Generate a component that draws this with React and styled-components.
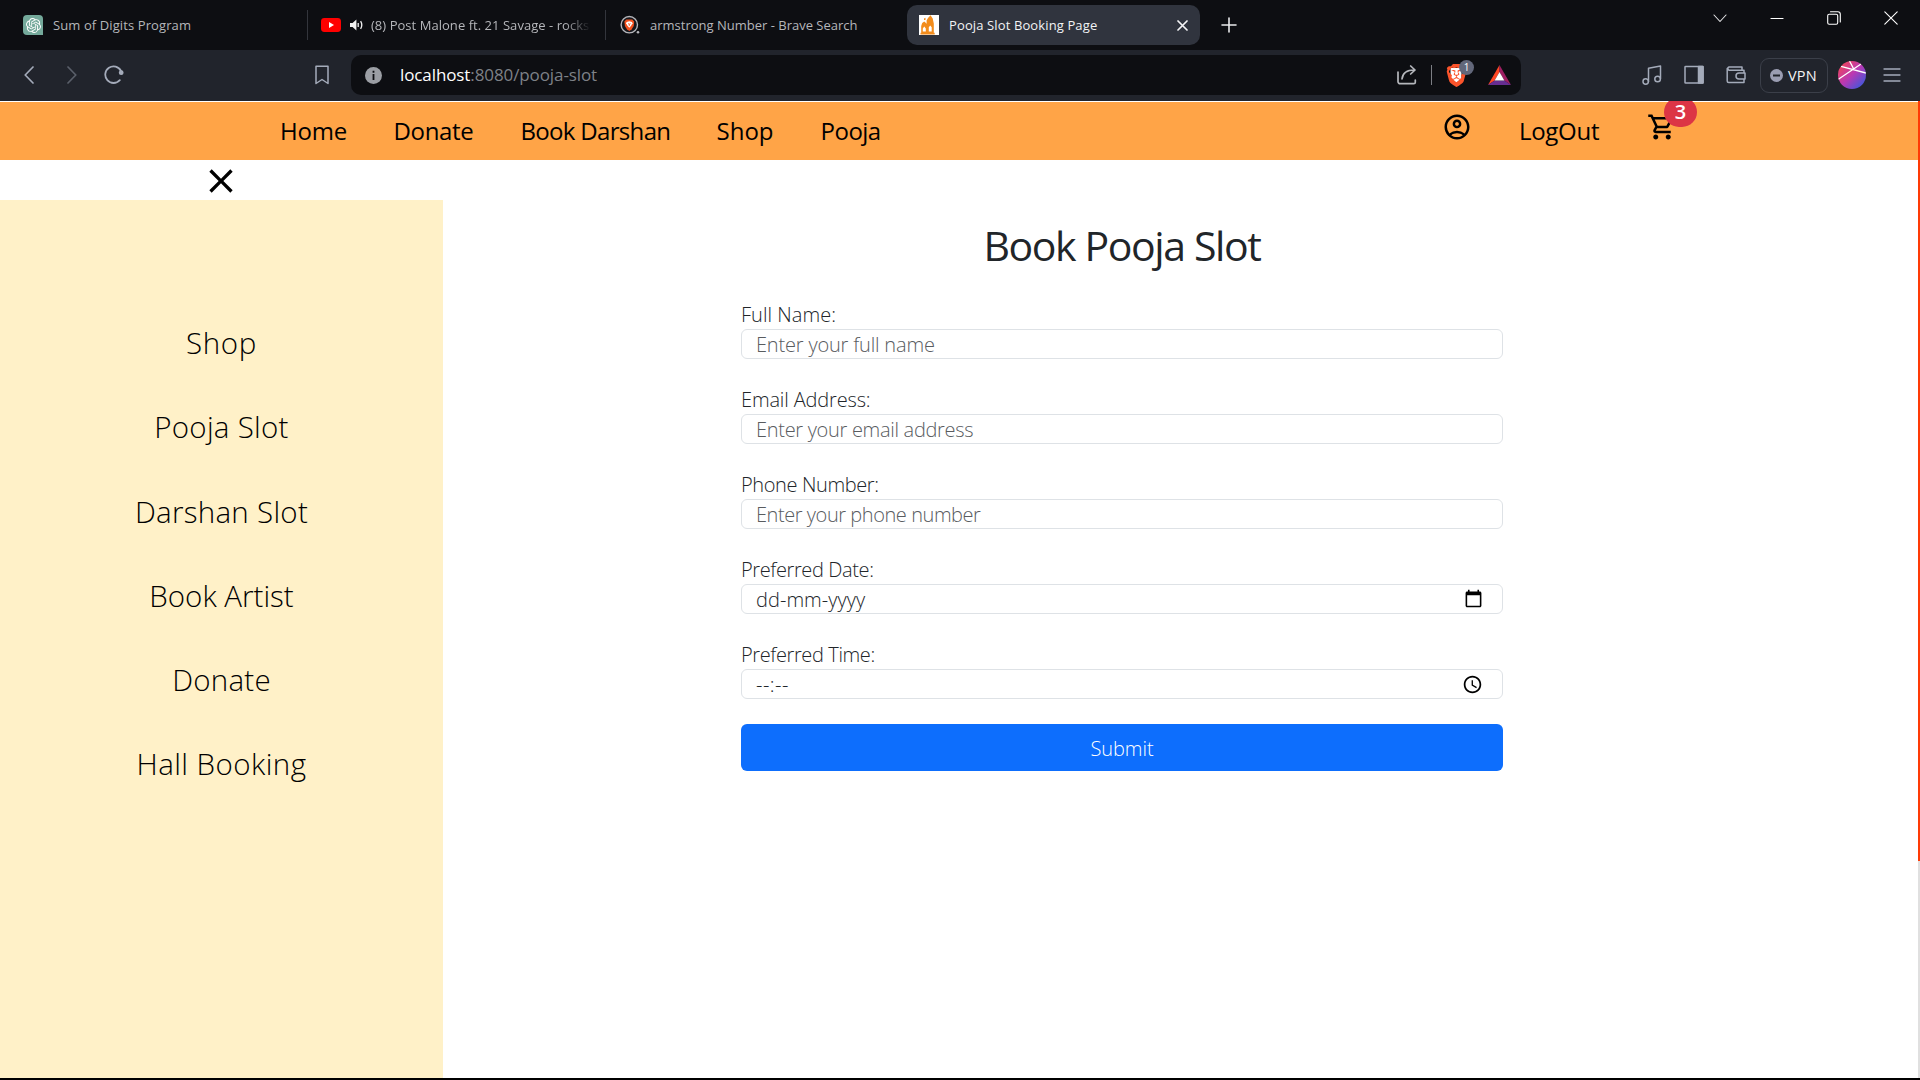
import React from 'react';
import styled, { createGlobalStyle } from 'styled-components';
import { MdOutlineAccountCircle, MdOutlineShoppingCart, MdClose, MdCalendarToday, MdAccessTime } from 'react-icons/md';
import { SiOpenai, SiBrave } from 'react-icons/si';

const Global = createGlobalStyle`
  * { box-sizing: border-box; }
  body { margin: 0; background: #fff; overflow: hidden; font-family: 'Open Sans', 'Noto Sans', sans-serif; }
  svg { display: block; flex: none; }
`;

const Screen = styled.div`
  display: flex;
  flex-direction: column;
  width: 1920px;
  height: 1080px;
  background: #000;
`;

/* ---------- browser window ---------- */

const TabStrip = styled.div`
  display: flex;
  height: 50px;
  background: #0d0e12;
`;

const Tab = styled.div`
  display: flex;
  align-items: center;
  width: ${p => p.$width}px;
  height: 30px;
  margin-top: 10px;
  padding-left: ${p => p.$inset}px;
  border-right: ${p => (p.$divider ? '1px solid #33353c' : '0')};
`;

const ActiveTab = styled.div`
  display: flex;
  align-items: center;
  width: 293px;
  height: 40px;
  margin: 5px 0 0 1px;
  padding: 0 12px 0 12px;
  border-radius: 10px;
  background: #30343e;
`;

const TabTitle = styled.span`
  flex: ${p => (p.$grow ? '1' : 'none')};
  width: ${p => (p.$width ? `${p.$width}px` : 'auto')};
  margin-left: ${p => p.$gap}px;
  overflow: hidden;
  white-space: nowrap;
  font-size: 13px;
  line-height: 20px;
  letter-spacing: ${p => p.$spacing || 0}px;
  color: ${p => (p.$active ? '#f2f3f5' : '#b5b6ba')};
  mask-image: ${p => (p.$fade ? 'linear-gradient(90deg, #000 88%, transparent 100%)' : 'none')};
`;

const GptTile = styled.div`
  display: grid;
  place-items: center;
  width: 20px;
  height: 20px;
  border-radius: 4px 4px 0 4px;
  background: #74a99b;
  color: #fff;
`;

const NewTab = styled.div`
  display: flex;
  align-items: center;
  flex: 1;
  padding: 0 0 1px 21px;
`;

const WindowButtons = styled.div`
  display: flex;
  gap: 43px;
  height: 36px;
  align-items: center;
  padding-right: 22px;
`;

const Toolbar = styled.div`
  display: flex;
  align-items: center;
  height: 51px;
  padding: 0 19px 1px 24px;
  background: #21242c;
`;

const NavButtons = styled.div`
  display: flex;
  align-items: center;
  width: 291px;
  gap: 33px;
`;

const Reload = styled.div`
  margin-left: -6px;
`;

const AddressBar = styled.div`
  display: flex;
  align-items: center;
  width: 1170px;
  height: 40px;
  padding: 0 10px 0 14px;
  border-radius: 10px;
  background: #0d0e12;
`;

const Bookmark = styled.div`
  width: 36px;
`;

const Url = styled.div`
  flex: 1;
  margin-left: 18px;
  padding-bottom: 1px;
  font-size: 17px;
  line-height: 24px;
  letter-spacing: -0.1px;
  color: #7e8187;
  b { font-weight: 400; color: #fff; }
`;

const BarDivider = styled.div`
  width: 1px;
  height: 20px;
  margin: 0 14px;
  background: #7c7e84;
`;

const ShieldBox = styled.div`
  position: relative;
  width: 22px;
  height: 23px;
  margin-right: 20px;
`;

const ShieldCount = styled.span`
  position: absolute;
  left: 13px;
  top: -4px;
  width: 15px;
  height: 15px;
  border-radius: 50%;
  background: #62677a;
  color: #fff;
  font-size: 10px;
  line-height: 15px;
  text-align: center;
`;

const Tools = styled.div`
  display: flex;
  flex: 1;
  align-items: center;
  justify-content: flex-end;
`;

const ToolIcons = styled.div`
  display: flex;
  gap: 22px;
  margin-right: 14px;
`;

const Vpn = styled.div`
  display: flex;
  align-items: center;
  gap: 5px;
  width: 68px;
  height: 35px;
  padding-left: 9px;
  margin-right: 10px;
  border: 1px solid #3b3f49;
  border-radius: 9px;
  color: #f3f3f6;
  font-size: 14.5px;
  letter-spacing: 0.2px;
`;

const MenuIcon = styled.div`
  margin-left: 17px;
`;

/* ---------- page ---------- */

const Viewport = styled.div`
  display: flex;
  height: 977px;
  overflow: hidden;
  background: #fff;
`;

const Page = styled.div`
  display: flex;
  flex-direction: column;
  flex: 1;
  padding-top: 1px;
`;

const ScrollTrack = styled.div`
  width: 2px;
  background: #e0e0e0;
`;

const ScrollThumb = styled.div`
  height: 760px;
  background: #ff3a05;
`;

const Navbar = styled.nav`
  display: flex;
  align-items: center;
  height: 58px;
  padding: 0 241px 0 280px;
  background: #ffa447;
`;

const NavLink = styled.a`
  width: ${p => p.$width}px;
  font-size: 24px;
  line-height: 36px;
  white-space: nowrap;
  letter-spacing: ${p => p.$spacing}px;
  color: #000;
`;

const NavEnd = styled.div`
  display: flex;
  align-items: center;
  margin-left: auto;
  padding-bottom: 1px;
`;

const Account = styled.div`
  margin: 0 47px 7px 0;
`;

const Cart = styled.div`
  position: relative;
  margin-bottom: 7px;
`;

const CartCount = styled.span`
  position: absolute;
  left: 17px;
  top: -15px;
  width: 33px;
  height: 30px;
  border-radius: 15px;
  background: #dc3545;
  color: #fff;
  font-size: 20px;
  font-weight: 600;
  line-height: 30px;
  text-align: center;
`;

const Body = styled.div`
  display: flex;
  flex: 1;
`;

const Aside = styled.aside`
  display: flex;
  flex-direction: column;
  width: 443px;
`;

const CloseStrip = styled.div`
  display: flex;
  align-items: center;
  justify-content: center;
  height: 40px;
  padding: 2px 1px 0 0;
`;

const SideMenu = styled.ul`
  flex: 1;
  margin: 0;
  padding: 101.3px 0 0;
  list-style: none;
  background: #fff1c8;
`;

const SideItem = styled.li`
  height: 84.2px;
  font-size: 29.5px;
  font-weight: 300;
  line-height: 84.2px;
  text-align: center;
  letter-spacing: ${p => p.$spacing}px;
  color: #000;
`;

const Form = styled.form`
  display: flex;
  flex-direction: column;
  width: 762px;
  margin-left: 298px;
  color: #212529;
`;

const Title = styled.h1`
  margin: 60px 0 28px;
  font-size: 41px;
  font-weight: 400;
  line-height: 51px;
  letter-spacing: -1.38px;
  text-align: center;
`;

const Group = styled.div`
  display: flex;
  flex-direction: column;
  margin-bottom: 25px;
`;

const Label = styled.label`
  height: 30px;
  font-size: 20px;
  font-weight: 300;
  line-height: 32px;
  letter-spacing: ${p => p.$spacing}px;
`;

const Field = styled.div`
  display: flex;
  align-items: center;
  justify-content: space-between;
  height: 30px;
  padding: ${p => (p.$raised ? '0 19px 2px 14px' : '0 19px 0 14px')};
  border: 1px solid #dee2e6;
  border-radius: 6px;
  font-size: 20px;
  font-weight: 300;
  letter-spacing: ${p => p.$spacing}px;
`;

const FieldValue = styled.span`
  padding-top: ${p => (p.$raised ? '4px' : '2px')};
  line-height: 26px;
`;

const TextInput = styled.input`
  width: 100%;
  height: 30px;
  padding: 0 15px 0 14px;
  border: 1px solid #dee2e6;
  border-radius: 6px;
  outline: 0;
  background: #fff;
  font: 300 20px 'Open Sans', 'Noto Sans', sans-serif;
  letter-spacing: ${p => p.$spacing}px;
  &::placeholder { color: #595c5f; opacity: 1; }
`;

const Submit = styled.button`
  height: 47px;
  padding: 2px 0 0;
  border: 0;
  border-radius: 6px;
  background: #0d6efd;
  color: #fff;
  font: 300 20px 'Open Sans', 'Noto Sans', sans-serif;
  letter-spacing: -0.06px;
`;

/* ---------- drawings ---------- */

const Line = ({ w, h, color = '#a4abba', stroke = 1.6, children }) => (
  <svg width={w} height={h} viewBox={`0 0 ${w} ${h}`} fill="none" stroke={color} strokeWidth={stroke}
    strokeLinecap="round" strokeLinejoin="round">{children}</svg>
);

const YouTubeIcon = () => (
  <svg width="20" height="14" viewBox="0 0 20 14">
    <rect width="20" height="14" rx="3.4" fill="#f00" />
    <path d="M8 4l5 3-5 3z" fill="#fff" />
  </svg>
);

const SpeakerIcon = () => (
  <svg width="13" height="12" viewBox="0 0 13 12">
    <path d="M0 4h2.6L6.4.6v10.8L2.6 8H0z" fill="#f1f1f1" />
    <path d="M8.2 4v4M10.6 2.2c1.4 2.2 1.4 5.4 0 7.6" stroke="#f1f1f1" strokeWidth="1.3" fill="none" />
  </svg>
);

const BraveSearchIcon = () => (
  <svg width="20" height="20" viewBox="0 0 20 20">
    <circle cx="9.3" cy="9.7" r="8.2" fill="#17181d" stroke="#b4b5ba" strokeWidth="1.4" />
    <path d="M6.3 4.4h6l1.9 2-.5 4.6-2 3.3-2.4 1.7-2.4-1.7-2-3.3-.5-4.6z" fill="#f4511e" />
    <path d="M6.6 7l2.7-.7L12 7l.5 1.2-1.4 2.6-1.8 2-1.8-2-1.4-2.6z" fill="#fff" />
    <path d="M8 8.6l1.3.5 1.3-.5M9.3 9v2" stroke="#f4511e" strokeWidth=".8" fill="none" />
    <circle cx="18" cy="17.3" r="1.3" fill="#b4b5ba" />
  </svg>
);

const TempleIcon = () => (
  <svg width="20" height="20" viewBox="0 0 20 20">
    <path fill="#fff" d="M0 0h20v20H0z" />
    <path fill="#f28c1c" d="M1.500 19.500v-1.800h.7V11l1-3 2-1.600 1.800 1.600.6 1V5.500L9 3 11.500.3 13.700 3.500l1.100 5v9.200h.9v1.800z" />
    <path fill="#fff" d="M3.800 16.400v-3l1.500-1.800 1.500 1.800v3zM9.800 16.600v-4.400l1.400-1.800 1.500 1.800v4.400z" />
    <path fill="#f28c1c" d="M5 5V3.500l1.500-.7V5z" />
  </svg>
);

const BatIcon = () => (
  <svg width="23" height="20" viewBox="0 0 23 20">
    <path fill="#ff4724" d="M11.5 0v7L6.6 15.6 0 20z" />
    <path fill="#9e1f63" d="M11.5 0L23 20l-6.6-4.4L11.5 7z" />
    <path fill="#662d91" d="M0 20l6.6-4.4h9.8L23 20z" />
    <path fill="#fff" d="M11.5 7l4.9 8.6H6.6z" />
  </svg>
);

const AvatarIcon = () => (
  <svg width="28" height="28" viewBox="0 0 28 28">
    <defs>
      <linearGradient id="avatar" x1="0.1" y1="0.1" x2="0.9" y2="0.9">
        <stop offset="0" stopColor="#f0455c" />
        <stop offset=".5" stopColor="#b838b4" />
        <stop offset="1" stopColor="#3e58dc" />
      </linearGradient>
      <clipPath id="disc"><circle cx="14" cy="14" r="14" /></clipPath>
    </defs>
    <g clipPath="url(#disc)">
      <path fill="url(#avatar)" d="M0 0h28v28H0z" />
      <path d="M0 18.500L23 3M3 5.300L28 12M11.500 0l4.500 8.500" stroke="#fff" strokeWidth="1.3" fill="none" />
    </g>
  </svg>
);

const tools = [
  <Line key="music" w={20} h={20} stroke={1.5}><path d="M6.5 16.5V3.2L18.5.9v12.6" /><circle cx="3.7" cy="16.5" r="2.7" /><circle cx="15.6" cy="14" r="2.8" /></Line>,
  <Line key="panel" w={20} h={20} stroke={1.5}><rect x="1" y="1.5" width="18" height="16.5" rx=".6" /><path d="M14.5 1.5H19V18h-4.5z" fill="#a4abba" /></Line>,
  <Line key="wallet" w={20} h={20} stroke={1.5}><path d="M16 5V2H3a1.7 1.7 0 0 0 0 3.200h15V8M1.200 3.500V16a1.500 1.500 0 0 0 1.500 1.500H18V14M19 8h-6a3 3 0 0 0 0 6h6z" /></Line>,
];

/* ---------- data ---------- */

const navLinks = [
  ['Home', 113.5, -0.2], ['Donate', 127, -0.35], ['Book Darshan', 196, -0.68], ['Shop', 104, 0], ['Pooja', 70, -0.5],
];
const sideLinks = [
  ['Shop', 0.6], ['Pooja Slot', 0.27], ['Darshan Slot', 0.29], ['Book Artist', 0], ['Donate', 0.25], ['Hall Booking', 0.45],
];
const textFields = [
  ['Full Name:', 0.05, 'Enter your full name', -0.18],
  ['Email Address:', -0.15, 'Enter your email address', -0.3],
  ['Phone Number:', -0.38, 'Enter your phone number', -0.44],
];

export default function App() {
  return (
    <Screen>
      <Global />
      <TabStrip>
        <Tab $width={308} $inset={23} $divider>
          <GptTile><SiOpenai size={15} /></GptTile>
          <TabTitle $gap={10} $spacing={0.1}>Sum of Digits Program</TabTitle>
        </Tab>
        <Tab $width={298} $inset={13} $divider>
          <YouTubeIcon />
          <TabTitle as="div" $gap={9}><SpeakerIcon /></TabTitle>
          <TabTitle $gap={8} $width={220} $fade $spacing={0.04}>(8) Post Malone ft. 21 Savage - rocks</TabTitle>
        </Tab>
        <Tab $width={300} $inset={14}>
          <BraveSearchIcon />
          <TabTitle $gap={10}>armstrong Number - Brave Search</TabTitle>
        </Tab>
        <ActiveTab>
          <TempleIcon />
          <TabTitle $gap={10} $spacing={0.12} $grow $active>Pooja Slot Booking Page</TabTitle>
          <Line w={11} h={11} color="#f4f4f6" stroke={1.7}><path d="M1 1l9 9M10 1l-9 9" /></Line>
        </ActiveTab>
        <NewTab>
          <Line w={16} h={16} color="#e9eaec" stroke={1.6}><path d="M8 1v14M1 8h14" /></Line>
        </NewTab>
        <WindowButtons>
          <Line w={14} h={9} color="#e4e4e6" stroke={1.1}><path d="M1 1l6 6.5 6-6.5" /></Line>
          <Line w={14} h={14} color="#fff" stroke={1.2}><path d="M1 7.5h12" /></Line>
          <Line w={14} h={14} color="#fff" stroke={1.1}><rect x=".7" y="3.2" width="10" height="10" rx="1.5" /><path d="M3.5.8h7.300a2.500 2.500 0 0 1 2.500 2.500V11" /></Line>
          <Line w={14} h={14} color="#fff" stroke={1.1}><path d="M.8.8l12.400 12.400M13.200.8L.8 13.200" /></Line>
        </WindowButtons>
      </TabStrip>

      <Toolbar>
        <NavButtons>
          <Line w={10} h={18} stroke={1.7}><path d="M9 1L1.200 9 9 17" /></Line>
          <Line w={10} h={18} stroke={1.7} color="#5a5f6a"><path d="M1 1l7.800 8L1 17" /></Line>
          <Reload>
            <Line w={20} h={20} stroke={1.8}><path d="M15.8 15.200A8.300 8.300 0 1 1 17 6" /><circle cx="17.2" cy="7.7" r="1.5" fill="#a4abba" /></Line>
          </Reload>
        </NavButtons>
        <Bookmark><Line w={14} h={20} stroke={1.5}><path d="M1 1.200h12V18.500L7 14.500l-6 4z" /></Line></Bookmark>
        <AddressBar>
          <svg width="17" height="17" viewBox="0 0 17 17"><circle cx="8.5" cy="8.5" r="8.5" fill="#9b9ea4" /><path d="M7.6 3.800h1.800v1.900H7.600zM7.600 7h1.800v6H7.600z" fill="#0d0e12" /></svg>
          <Url><b>localhost</b>:8080/pooja-slot</Url>
          <Line w={20} h={20} color="#b5b7bc" stroke={1.7}><path d="M1 7v9.500A2.200 2.200 0 0 0 3.200 18.700h13.600a1.500 1.500 0 0 0 1.500-1.500V15M5 14C5.500 8.500 9.500 5 17.500 5M13.700 1l4.300 4-4.300 4" /></Line>
          <BarDivider />
          <ShieldBox>
            <svg width="20" height="23" viewBox="0 0 20 23"><path d="M4.500 4h11v10.500L10 19l-5.500-4.500z" fill="#fff" /></svg>
            <SiBrave size={23} color="#fb542b" style={{ position: 'absolute', left: -1, top: 0 }} />
            <ShieldCount>1</ShieldCount>
          </ShieldBox>
          <BatIcon />
        </AddressBar>
        <Tools>
          <ToolIcons>{tools}</ToolIcons>
          <Vpn>
            <svg width="13" height="13" viewBox="0 0 13 13"><circle cx="6.5" cy="6.5" r="6.5" fill="#9a9db2" /><path d="M3 5.500h7v2H3z" fill="#21242c" /></svg>
            VPN
          </Vpn>
          <AvatarIcon />
          <MenuIcon><Line w={18} h={14} stroke={1.3}><path d="M1 1h16M1 7h16M1 13h16" /></Line></MenuIcon>
        </Tools>
      </Toolbar>

      <Viewport>
        <Page>
          <Navbar>
            {navLinks.map(([text, width, spacing]) => (
              <NavLink key={text} $width={width} $spacing={spacing}>{text}</NavLink>
            ))}
            <NavEnd>
              <Account><MdOutlineAccountCircle size={30} /></Account>
              <NavLink $width={128} $spacing={-0.3}>LogOut</NavLink>
              <Cart>
                <MdOutlineShoppingCart size={30} />
                <CartCount>3</CartCount>
              </Cart>
            </NavEnd>
          </Navbar>
          <Body>
            <Aside>
              <CloseStrip><MdClose size={40} /></CloseStrip>
              <SideMenu>
                {sideLinks.map(([text, spacing]) => <SideItem key={text} $spacing={spacing}>{text}</SideItem>)}
              </SideMenu>
            </Aside>
            <Form>
              <Title>Book Pooja Slot</Title>
              {textFields.map(([label, ls, placeholder, ps]) => (
                <Group key={label}>
                  <Label $spacing={ls}>{label}</Label>
                  <TextInput placeholder={placeholder} $spacing={ps} />
                </Group>
              ))}
              <Group>
                <Label $spacing={-0.38}>Preferred Date:</Label>
                <Field $spacing={0.05} $raised>
                  <FieldValue $raised>dd-mm-yyyy</FieldValue>
                  <MdCalendarToday size={19} color="#000" />
                </Field>
              </Group>
              <Group>
                <Label $spacing={-0.38}>Preferred Time:</Label>
                <Field $spacing={0.48}>
                  <FieldValue>--:--</FieldValue>
                  <MdAccessTime size={21} color="#000" />
                </Field>
              </Group>
              <Submit type="button">Submit</Submit>
            </Form>
          </Body>
        </Page>
        <ScrollTrack><ScrollThumb /></ScrollTrack>
      </Viewport>
    </Screen>
  );
}
